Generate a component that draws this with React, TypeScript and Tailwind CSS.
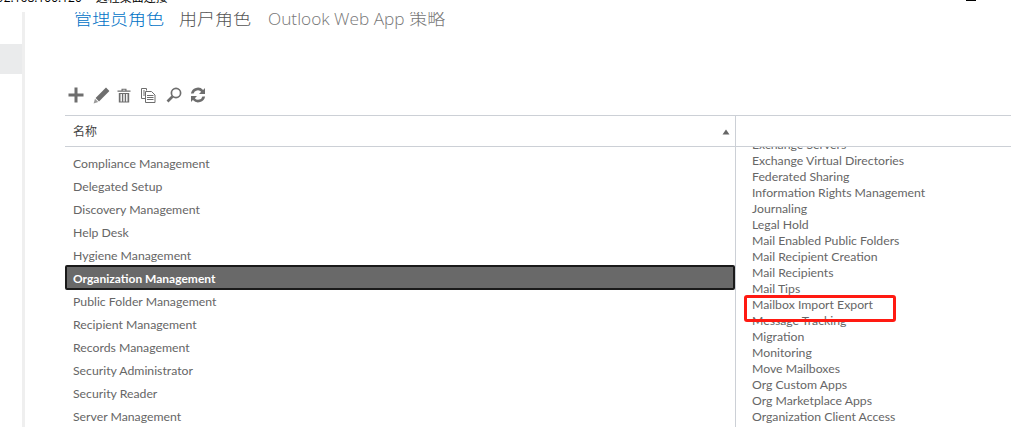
import React from 'react'

const FONT = { fontFamily: 'Lato, "Noto Sans CJK SC", sans-serif' }
const TITLE_FONT = { fontFamily: '"Open Sans", "Noto Sans CJK SC", sans-serif' }

const leftRoles = [
  'Compliance Management',
  'Delegated Setup',
  'Discovery Management',
  'Help Desk',
  'Hygiene Management',
  'Organization Management',
  'Public Folder Management',
  'Recipient Management',
  'Records Management',
  'Security Administrator',
  'Security Reader',
  'Server Management',
]

const rightRoles = [
  'Exchange Servers',
  'Exchange Virtual Directories',
  'Federated Sharing',
  'Information Rights Management',
  'Journaling',
  'Legal Hold',
  'Mail Enabled Public Folders',
  'Mail Recipient Creation',
  'Mail Recipients',
  'Mail Tips',
  'Mailbox Import Export',
  'Message Tracking',
  'Migration',
  'Monitoring',
  'Move Mailboxes',
  'Org Custom Apps',
  'Org Marketplace Apps',
  'Organization Client Access',
]

function Toolbar() {
  return (
    <div className="flex items-center h-[20px] mt-[14px] text-[#6e6e6e]">
      {/* plus */}
      <svg width="16" height="16" viewBox="0 0 16 16" className="ml-[3px]">
        <path d="M6.5 0.5h3v6h6v3h-6v6h-3v-6h-6v-3h6z" fill="currentColor" />
      </svg>
      {/* pencil */}
      <svg width="17" height="17" viewBox="0 0 17 17" className="ml-[9px]">
        <path d="M13 0.6l3.4 3.4L6 14.4 2.6 11z" fill="currentColor" />
        <path d="M2 11.8l3.2 3.2-4.6 1.4z" fill="#9a9a9a" />
      </svg>
      {/* trash */}
      <svg width="14" height="15" viewBox="0 0 14 15" className="ml-[7px]">
        <path d="M0.5 2.5h13v1.2h-13zM4.5 2.5V0.8h5v1.7h-1.2V1.8H5.7v.7z" fill="currentColor" />
        <path d="M1.8 5h10.4v9.5H1.8z" fill="currentColor" />
        <path d="M3.5 6h1.4v7.4H3.5zM6.3 6h1.4v7.4H6.3zM9.1 6h1.4v7.4H9.1z" fill="#fff" />
      </svg>
      {/* copy */}
      <svg width="16" height="15" viewBox="0 0 16 15" className="ml-[10px]" fill="none" stroke="currentColor" strokeWidth="1">
        <path d="M5.5 2.5V0.5h-5v10h3.5" />
        <path d="M2 3h2M2 5h2M2 7h2" />
        <path d="M4.5 3.5h6l3.5 3.5v7.5H4.5z" fill="#fff" />
        <path d="M6 7.5h6.5M6 9.5h6.5M6 11.5h6.5" />
      </svg>
      {/* search */}
      <svg width="16" height="16" viewBox="0 0 16 16" className="ml-[9px]" fill="none" stroke="currentColor">
        <circle cx="10" cy="6" r="4.6" strokeWidth="1.7" />
        <path d="M6.5 9.5L1.5 14.5" strokeWidth="2.6" />
      </svg>
      {/* refresh */}
      <svg width="16" height="16" viewBox="0 0 16 16" className="ml-[8px]">
        <path d="M15 1v6H9l2.2-2.2A4.4 4.4 0 0 0 3.6 6.6H0.9a7.1 7.1 0 0 1 12.2-3.7z" fill="currentColor" />
        <path d="M1 15V9h6l-2.2 2.2a4.4 4.4 0 0 0 7.6-1.8h2.7a7.1 7.1 0 0 1-12.2 3.7z" fill="currentColor" />
      </svg>
    </div>
  )
}

export default function App() {
  return (
    <div
      className="relative flex flex-col w-[1011px] h-[427px] overflow-hidden bg-white text-[12.25px] text-[#666666]"
      style={FONT}
    >
      {/* clipped window title on top */}
      <div className="flex h-[12px] overflow-hidden text-black" style={TITLE_FONT}>
        <div className="flex h-[3px] overflow-hidden">
          <div className="flex whitespace-nowrap text-[12px] leading-[16px] -mt-[10px] -ml-[10px]">
            <span>192.168.100.120</span>
            <span className="ml-[14px]">远程桌面连接</span>
          </div>
        </div>
        <div className="ml-auto mr-[35px] w-[10px] h-px bg-black" />
      </div>

      <div className="flex flex-1 min-h-0">
        {/* left nav rail */}
        <div className="w-[25px] shrink-0 border-r-[3px] border-[#efefef] pt-[32px]">
          <div className="h-[30px] bg-[#eaebec]" />
        </div>

        <div className="flex flex-col flex-1 min-w-0 pl-[40px]">
          {/* tabs, scrolled a little under the title bar */}
          <div className="h-[20px] overflow-hidden pl-[9px]" style={TITLE_FONT}>
            <div className="flex gap-[15px] -mt-[6px] text-[18px] leading-[24px] font-light whitespace-nowrap">
              <span className="text-[#0072c6]">管理员角色</span>
              <span className="text-[#555555]">用户角色</span>
              <span className="text-[#777777] ml-[2px]">
                <span className="text-[17.25px]">Outlook Web App</span> 策略
              </span>
            </div>
          </div>

          <div className="mt-[39px]">
            <Toolbar />
          </div>

          {/* list header */}
          <div className="grid grid-cols-[670px_1fr] h-[32px] mt-[10px] border-y border-[#ccd0d6]">
            <div className="flex items-center justify-between pl-[8px] pr-[5px] pt-[1px] text-[#444444]">
              <span className="text-[12px]">名称</span>
              <svg width="8" height="6" viewBox="0 0 8 6">
                <path d="M4 0.5L7.5 5.5H0.5z" fill="#666666" />
              </svg>
            </div>
            <div className="border-l border-[#ccd0d6]" />
          </div>

          {/* two lists */}
          <div className="grid grid-cols-[670px_1fr] flex-1 min-h-0">
            <div className="pt-[5px] overflow-hidden">
              {leftRoles.map((role) =>
                role === 'Organization Management' ? (
                  <div
                    key={role}
                    className="flex items-center h-[25px] -mt-[2px] pt-[2px] pl-[6px] border-2 border-[#1a1a1a] rounded-[2px] bg-[#696969] text-white font-bold text-[12px]"
                  >
                    {role}
                  </div>
                ) : (
                  <div key={role} className="flex items-center h-[23px] pt-[2px] pl-[8px]">
                    {role}
                  </div>
                ),
              )}
            </div>
            <div className="border-l border-[#ccd0d6] pl-[16px] overflow-hidden">
              <div className="-mt-[10px]">
                {rightRoles.map((role) => (
                  <div key={role} className="flex items-center h-[16px] whitespace-nowrap">
                    {role}
                  </div>
                ))}
              </div>
            </div>
          </div>
        </div>
      </div>

      {/* red annotation box from the screenshot */}
      <div className="absolute left-[744px] top-[295px] w-[152px] h-[27px] border-[3px] border-[#ff1a12] rounded-[3px]" />
    </div>
  )
}
